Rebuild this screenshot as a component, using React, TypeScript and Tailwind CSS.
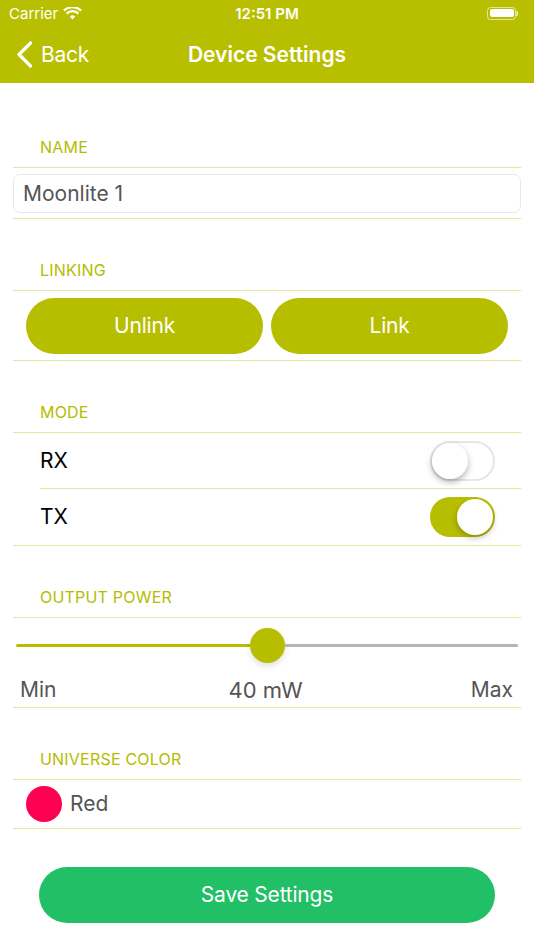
import React from "react";

const Line = ({ inset = false }: { inset?: boolean }) => (
  <div className={inset ? "h-px bg-[#e3e69c] ml-[40px] mr-[13px]" : "h-px bg-[#e3e69c] mx-[13px]"} />
);

const SectionLabel = ({ text }: { text: string }) => (
  <div className="h-[71px] flex items-end pb-[10px] pl-[40px]">
    <span className="text-[16px] leading-[20px] tracking-[0.2px] text-[#b5bc00]">{text}</span>
  </div>
);

const Toggle = ({ on }: { on: boolean }) =>
  on ? (
    <div className="w-[65px] h-[40px] rounded-full bg-[#b7be00] flex items-center justify-end p-[2px]">
      <div className="w-[36px] h-[36px] rounded-full bg-white shadow-[0_3px_6px_rgba(0,0,0,0.25)]" />
    </div>
  ) : (
    <div className="w-[65px] h-[40px] rounded-full bg-white border-[2px] border-[#e6e6e6] flex items-center justify-start">
      <div className="w-[36px] h-[36px] rounded-full bg-white shadow-[0_3px_6px_rgba(0,0,0,0.3)]" />
    </div>
  );

export default function App() {
  return (
    <div
      className="w-[534px] h-[950px] bg-white overflow-hidden"
      style={{ fontFamily: "Inter, 'Noto Sans', sans-serif" }}
    >
      {/* Header */}
      <div className="bg-[#b8bf00] h-[83px] text-white">
        <div className="h-[26px] relative flex items-center px-[9px]">
          <span className="text-[15px] leading-none">Carrier</span>
          <svg className="ml-[5px]" width="19" height="13" viewBox="0 0 19 13">
            <path d="M9.5 12.5 L6.8 9.6 A4 4 0 0 1 12.2 9.6 Z" fill="white" />
            <path d="M3.6 6.6 A8.5 8.5 0 0 1 15.4 6.6" stroke="white" strokeWidth="2.2" fill="none" />
            <path d="M0.9 3.6 A12.5 12.5 0 0 1 18.1 3.6" stroke="white" strokeWidth="2.2" fill="none" />
          </svg>
          <span className="absolute left-0 right-0 text-center text-[15px] font-semibold leading-none">12:51 PM</span>
          <div className="ml-auto mr-[7px] flex items-center">
            <div className="w-[29px] h-[13px] rounded-[3.5px] border border-white/60 p-[1.5px]">
              <div className="w-full h-full bg-white rounded-[2px]" />
            </div>
            <div className="w-[2px] h-[5px] bg-white/60 rounded-r-[1px]" />
          </div>
        </div>
        <div className="h-[57px] relative flex items-center">
          <svg className="ml-[16px]" width="17" height="27" viewBox="0 0 17 27">
            <path d="M14.5 2 L3 13.5 L14.5 25" stroke="white" strokeWidth="3.2" fill="none" strokeLinecap="round" strokeLinejoin="round" />
          </svg>
          <span className="ml-[8px] text-[21px] tracking-[-0.3px] leading-none">Back</span>
          <span className="absolute left-0 right-0 text-center text-[21px] font-semibold leading-none pointer-events-none">
            Device Settings
          </span>
        </div>
      </div>

      {/* NAME */}
      <div className="h-[13px]" />
      <SectionLabel text="NAME" />
      <Line />
      <div className="h-[50px] px-[13px] flex items-center">
        <div className="w-full h-[39px] border border-[#e8e8e8] rounded-[7px] flex items-center px-[9px]">
          <span className="text-[21px] text-[#555555] leading-none">Moonlite 1</span>
        </div>
      </div>
      <Line />

      {/* LINKING */}
      <SectionLabel text="LINKING" />
      <Line />
      <div className="h-[69px] px-[26px] flex items-center gap-[8px]">
        <div className="flex-1 h-[56px] rounded-full bg-[#b7be00] flex items-center justify-center text-white text-[21px] tracking-[-0.2px]">
          Unlink
        </div>
        <div className="flex-1 h-[56px] rounded-full bg-[#b7be00] flex items-center justify-center text-white text-[21px] tracking-[-0.2px]">
          Link
        </div>
      </div>
      <Line />

      {/* MODE */}
      <SectionLabel text="MODE" />
      <Line />
      <div className="h-[55px] flex items-center pl-[40px] pr-[39px]">
        <span className="text-[21px] text-black">RX</span>
        <div className="ml-auto">
          <Toggle on={false} />
        </div>
      </div>
      <Line inset />
      <div className="h-[56px] flex items-center pl-[40px] pr-[39px]">
        <span className="text-[21px] text-black">TX</span>
        <div className="ml-auto">
          <Toggle on={true} />
        </div>
      </div>
      <Line />

      {/* OUTPUT POWER */}
      <SectionLabel text="OUTPUT POWER" />
      <Line />
      <div className="h-[89px] px-[16px] flex flex-col">
        <div className="h-[54px] flex items-center">
          <div className="h-[3px] w-[234px] bg-[#b7be00] rounded-l-full" />
          <div className="w-[35px] h-[35px] rounded-full bg-[#b7be00] shadow-[0_3px_6px_rgba(0,0,0,0.12)] shrink-0" />
          <div className="h-[3px] flex-1 bg-[#b5b5b5] rounded-r-full" />
        </div>
        <div className="h-[35px] flex items-center justify-between px-[4px] mr-[1px]">
          <span className="text-[21px] text-[#555555] leading-none">Min</span>
          <span className="text-[22px] text-[#555555] leading-none pl-[4px]">40 mW</span>
          <span className="text-[21px] text-[#555555] leading-none">Max</span>
        </div>
      </div>
      <Line />

      {/* UNIVERSE COLOR */}
      <SectionLabel text="UNIVERSE COLOR" />
      <Line />
      <div className="h-[48px] flex items-center pl-[26px]">
        <div className="w-[36px] h-[36px] rounded-full bg-[#ff0052]" />
        <span className="ml-[8px] text-[21px] text-[#555555]">Red</span>
      </div>
      <Line />

      {/* Save */}
      <div className="h-[38px]" />
      <div className="mx-[39px] h-[56px] rounded-full bg-[#22c066] flex items-center justify-center text-white text-[21px] tracking-[-0.2px]">
        Save Settings
      </div>
    </div>
  );
}
